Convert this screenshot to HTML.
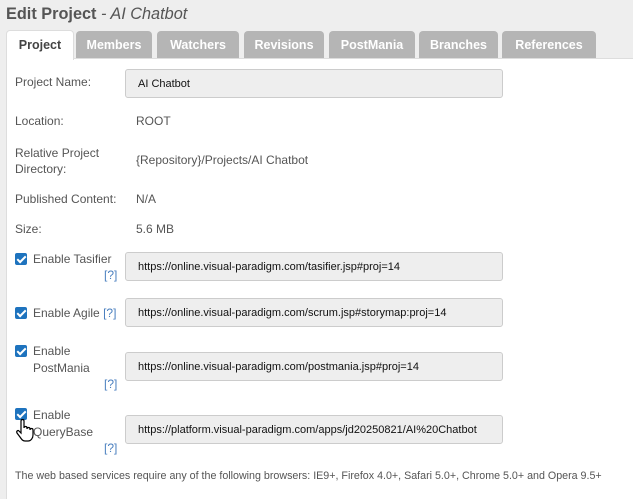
<html><head><style>
body{margin:0;width:633px;height:493px;background:#eee;font-family:"Liberation Sans",Arial,sans-serif;font-size:12px;color:#555;position:relative;overflow:hidden}
.a{position:absolute}
h1{position:absolute;left:6px;top:5px;margin:0;font-size:16.3px;font-weight:bold;color:#555}
h1 i{font-weight:normal}
.tab{position:absolute;top:31px;height:27px;background:#b5b5b5;color:#fff;font-weight:bold;font-size:12.5px;text-align:center;line-height:29px;border-radius:4px 4px 0 0}
.tab.on{background:#fff;color:#444;border:1px solid #ddd;border-bottom:none;top:30px;height:29px}
.panel{position:absolute;left:6px;top:58px;width:640px;height:440px;background:#fff;border-left:1px solid #ddd;border-top:1px solid #ddd}
.in{position:absolute;left:125px;height:29px;background:#eee;border:1px solid #ccc;border-radius:3px;color:#111;font-size:11px;line-height:29px;padding-left:12px;box-sizing:border-box;width:378px}
.cb{position:absolute;left:15px;width:12px;height:12px;background:#1e73be;border-radius:2px}
.cb:after{content:"";position:absolute;left:4px;top:1px;width:3px;height:7px;border:solid #fff;border-width:0 2px 2px 0;transform:rotate(45deg)}
.q{position:absolute;color:#4a7fbf;font-size:12px}
</style></head><body>
<h1>Edit Project <i>- AI Chatbot</i></h1>
<div class="panel"></div>
<div class="tab on" style="left:6px;width:66px">Project</div>
<div class="tab" style="left:76px;width:76px">Members</div>
<div class="tab" style="left:157px;width:82px">Watchers</div>
<div class="tab" style="left:244px;width:80px">Revisions</div>
<div class="tab" style="left:329px;width:86px">PostMania</div>
<div class="tab" style="left:419px;width:79px">Branches</div>
<div class="tab" style="left:502px;width:94px">References</div>

<div class="a" style="left:15px;top:75px">Project Name:</div>
<div class="in" style="top:69px">AI Chatbot</div>
<div class="a" style="left:15px;top:114px">Location:</div>
<div class="a" style="left:136px;top:114px">ROOT</div>
<div class="a" style="left:15px;top:145px;line-height:16px">Relative Project<br>Directory:</div>
<div class="a" style="left:136px;top:153px">{Repository}/Projects/AI Chatbot</div>
<div class="a" style="left:15px;top:192px">Published Content:</div>
<div class="a" style="left:136px;top:192px">N/A</div>
<div class="a" style="left:15px;top:222px">Size:</div>
<div class="a" style="left:136px;top:222px">5.6 MB</div>

<div class="cb" style="top:253px"></div>
<div class="a" style="left:33px;top:252px">Enable Tasifier</div>
<div class="q" style="left:104px;top:268px">[?]</div>
<div class="in" style="top:252px">https://online.visual-paradigm.com/tasifier.jsp#proj=14</div>

<div class="cb" style="top:307px"></div>
<div class="a" style="left:33px;top:306px">Enable Agile <span style="color:#4a7fbf">[?]</span></div>
<div class="in" style="top:298px">https://online.visual-paradigm.com/scrum.jsp#storymap:proj=14</div>

<div class="cb" style="top:345px"></div>
<div class="a" style="left:33px;top:343px;line-height:17px">Enable<br>PostMania</div>
<div class="q" style="left:104px;top:377px">[?]</div>
<div class="in" style="top:352px">https://online.visual-paradigm.com/postmania.jsp#proj=14</div>

<div class="cb" style="top:408px"></div>
<div class="a" style="left:33px;top:407px;line-height:17px">Enable<br>QueryBase</div>
<div class="q" style="left:104px;top:441px">[?]</div>
<div class="in" style="top:415px">https://platform.visual-paradigm.com/apps/jd20250821/AI%20Chatbot</div>
<svg class="a" style="left:15px;top:418px" width="22" height="24" viewBox="0 0 22 24"><path d="M6 3c0-2 3-2 3 0v7c0-2 3-2 3 0v1c0-2 3-2 3 0v1c0-2 3-2 3 0v5c0 3-2 6-5 6h-3c-2 0-3-1-5-4l-3-4c-1-2 1-3 2-2l2 2z" fill="#fff" stroke="#000" stroke-width="1.2"/></svg>

<div class="a" style="left:15px;top:470px;font-size:10.7px">The web based services require any of the following browsers: IE9+, Firefox 4.0+, Safari 5.0+, Chrome 5.0+ and Opera 9.5+</div>
</body></html>
